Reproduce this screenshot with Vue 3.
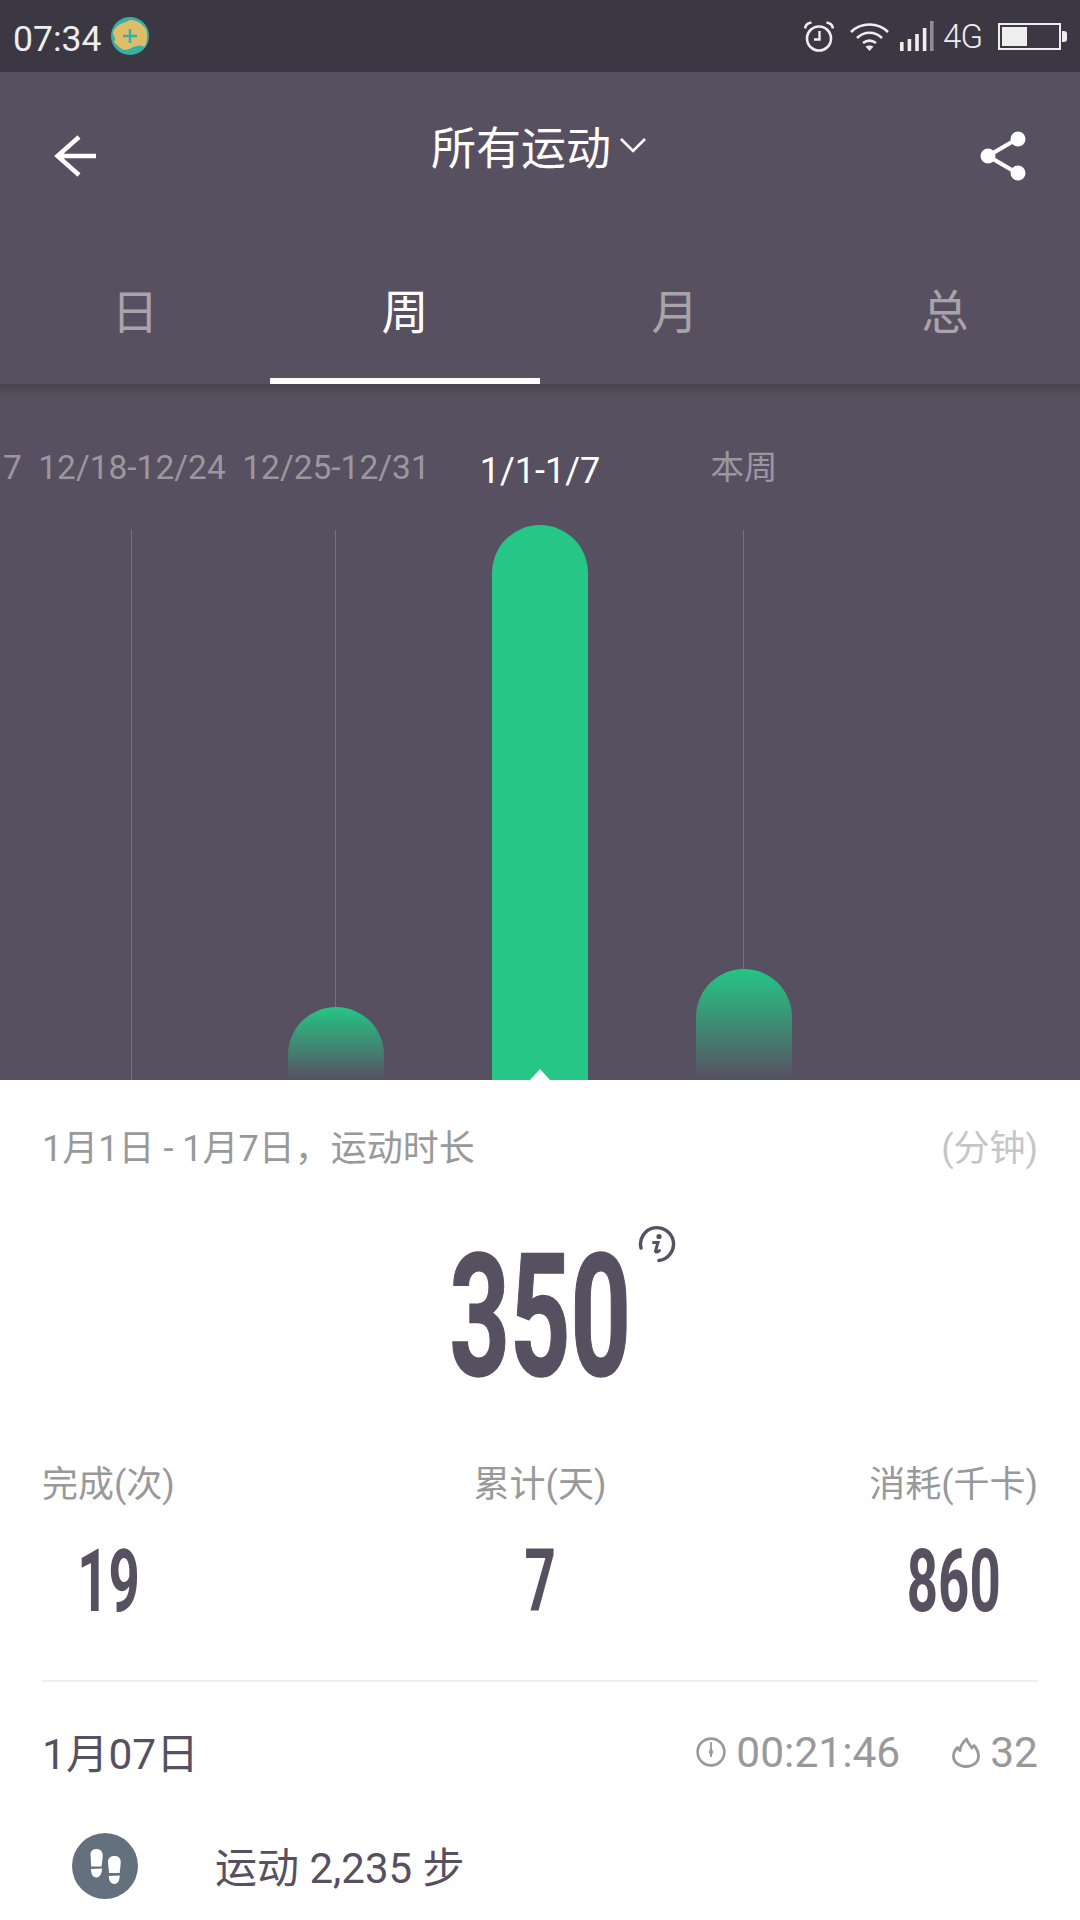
<template>
  <div class="page">
    <div class="status">
      <span class="time">07:34</span>
      <svg class="app-dot" width="38" height="38" viewBox="0 0 38 38">
        <circle cx="19" cy="19" r="19" fill="#37b0a4" />
        <path d="M2 15C6 6 14 6 19 3C27 3 32 8 35 12C37 20 36 27 33 30C27 26 22 31 15 33C10 33 6 28 3 25C6 22 2 19 2 15Z" fill="#dfbd68" />
        <path d="M19 12V26M12 19H26" stroke="#37b0a4" stroke-width="2.5" />
      </svg>
      <div class="status-right">
        <svg class="ic-alarm" width="30" height="31" viewBox="0 0 30 31" fill="none" stroke="#eee">
          <circle cx="15" cy="17.5" r="12" stroke-width="2.6" />
          <path d="M15.5 10V18.5H10" stroke-width="2.4" />
          <path d="M1 7.5C1.5 4 4 2 7.5 1.5M29 7.5C28.5 4 26 2 22.5 1.5" stroke-width="2.6" />
        </svg>
        <svg class="ic-wifi" width="39" height="30" viewBox="0 0 39 30" fill="none" stroke="#eee" stroke-width="2.6">
          <path d="M1 11C11 1 28 1 38 11" />
          <path d="M7 17C14 10 25 10 32 17" />
          <path d="M13 22C17 19 22 19 26 22" />
          <path d="M19.5 30L15.5 25.5C18 24 21 24 23.5 25.5Z" fill="#eee" stroke="none" />
        </svg>
        <svg class="ic-signal" width="34" height="30" viewBox="0 0 34 30">
          <rect x="0" y="21" width="3.6" height="9" fill="#eee" />
          <rect x="7.6" y="18" width="3.6" height="12" fill="#eee" />
          <rect x="15.2" y="13" width="3.6" height="17" fill="#eee" />
          <rect x="22.8" y="7" width="3.6" height="23" fill="#eee" />
          <rect x="30" y="0" width="3.6" height="30" fill="#8f8c93" />
        </svg>
        <span class="net">4G</span>
        <div class="battery"><div class="battery-fill"></div></div>
      </div>
    </div>

    <div class="top">
      <div class="nav">
        <svg width="44" height="44" viewBox="0 0 44 44" fill="none" stroke="#fff" stroke-width="4.4">
          <path d="M25 3L3.500 22L25 41M3.500 22H42" />
        </svg>
        <div class="nav-title">
          <span>所有运动</span>
          <svg width="28" height="17" viewBox="0 0 28 17" fill="none" stroke="#fff" stroke-width="2.6">
            <path d="M2 2L14 14L26 2" />
          </svg>
        </div>
        <svg width="46" height="50" viewBox="0 0 46 50" fill="#fff">
          <path d="M37 8L8 25L37 42" fill="none" stroke="#fff" stroke-width="4.2" />
          <circle cx="38" cy="8" r="7.5" />
          <circle cx="8" cy="25" r="7.5" />
          <circle cx="38" cy="42" r="7.5" />
        </svg>
      </div>
      <div class="tabs">
        <div v-for="t in tabs" :key="t" class="tab" :class="{ active: t === '周' }">{{ t }}</div>
      </div>
    </div>

    <div class="chart">
      <div v-for="(w, i) in weeks" :key="i" class="week" :class="{ current: w.active }">
        <div class="week-label">{{ w.label }}</div>
        <div class="track">
          <div v-if="w.line" class="line"></div>
          <div v-if="w.height" class="bar" :style="{ height: w.height + 'px' }"></div>
        </div>
      </div>
      <div class="pointer"></div>
    </div>

    <div class="panel">
      <div class="range">
        <span>1月1日 - 1月7日，运动时长</span>
        <span class="unit">(分钟)</span>
      </div>
      <div class="total">
        <span class="big">350</span>
        <svg class="info" width="38" height="38" viewBox="0 0 38 38" fill="none" stroke="#575060">
          <path d="M3 23A16.500 16.500 0 1 1 21 35.500" stroke-width="3.4" stroke-linecap="round" />
          <circle cx="21" cy="11.5" r="2.6" fill="#575060" stroke="none" />
          <path d="M15.500 17.500H20L17.500 26C17.500 27.500 19.500 27.500 21.500 25.500" stroke-width="3" stroke-linecap="round" />
        </svg>
      </div>
      <div class="stats">
        <div v-for="s in stats" :key="s.label" class="stat">
          <span class="stat-label">{{ s.label }}</span>
          <span class="stat-value">{{ s.value }}</span>
        </div>
      </div>
      <div class="day">
        <span class="day-date">1月07日</span>
        <div class="day-info">
          <svg width="30" height="30" viewBox="0 0 30 30" fill="none" stroke="#999">
            <circle cx="15" cy="15" r="13.4" stroke-width="2.6" />
            <path d="M15 5V20" stroke-width="1.8" />
            <path d="M15 10.500L17.400 15L15 19.500L12.600 15Z" fill="#999" stroke="none" />
          </svg>
          <span class="duration">00:21:46</span>
          <svg class="flame" width="28" height="31" viewBox="0 0 28 31" fill="none" stroke="#999" stroke-width="2.8" stroke-linejoin="round">
            <path d="M14.500 2C15.500 6 18.500 8 20 11L22 8.500C25 12 26.500 15.500 26.500 19C26.500 25.500 21 29.500 14 29.500C7 29.500 1.500 25.500 1.500 19C1.500 15 3.500 12.500 5.500 10.500C6 12 7 13 8 13.500C8.500 9 11 5 14.500 2Z" />
          </svg>
          <span class="kcal">32</span>
        </div>
      </div>
      <div class="steps">
        <div class="steps-icon">
          <svg width="31" height="35" viewBox="0 0 31 35" fill="#fff">
            <path d="M0.500 5.500C0.500 2 3 0 6.500 0C10 0 12.700 2.200 12.700 6C12.700 10 12 14 11.500 17.500L1.200 17.500C1.200 13.500 0.500 9.500 0.500 5.500Z" />
            <path d="M1 20L12 19.600C12 25 9.500 28.500 6.500 28.500C3 28.500 1 25 1 20Z" />
            <path d="M18 12.500C18 9 21 7 24.500 7C28 7 30.700 9 30.700 12.500C30.700 16.500 30 20.500 29.700 24H19C19 20 18 16.500 18 12.500Z" />
            <path d="M18.800 27L29.700 26.600C29.700 32 27.500 35 24.500 35C21 35 18.800 32 18.800 27Z" />
          </svg>
        </div>
        <span class="steps-text">运动 2,235 步</span>
      </div>
    </div>
  </div>
</template>

<script setup>
const tabs = ['日', '周', '月', '总']

const weeks = [
  { label: '12/11-12/17', line: false, height: 0 },
  { label: '12/18-12/24', line: true, height: 0 },
  { label: '12/25-12/31', line: true, height: 73 },
  { label: '1/1-1/7', line: false, height: 555, active: true },
  { label: '本周', line: true, height: 111 },
  { label: '', line: false, height: 0 },
  { label: '', line: false, height: 0 }
]

const stats = [
  { label: '完成(次)', value: '19' },
  { label: '累计(天)', value: '7' },
  { label: '消耗(千卡)', value: '860' }
]
</script>

<style>
html,
body {
  margin: 0;
  background: #fff;
}
</style>

<style scoped>
.page {
  width: 1080px;
  height: 1920px;
  overflow: hidden;
  background: #fff;
  font-family: Roboto, "Noto Sans CJK SC", sans-serif;
}

.status {
  height: 72px;
  box-sizing: border-box;
  padding: 0 13px;
  display: flex;
  align-items: center;
  background: #3c3843;
  color: #eee;
}

.time {
  font-size: 35.5px;
  line-height: 72px;
  padding-top: 6px;
}

.app-dot {
  margin-left: 10px;
}

.status-right {
  margin-left: auto;
  display: flex;
  align-items: center;
}

.ic-wifi {
  margin-left: 16px;
}

.ic-signal {
  margin-left: 11px;
}

.net {
  margin-left: 9px;
  font-size: 33px;
  font-weight: 300;
  letter-spacing: -1px;
}

.battery {
  position: relative;
  margin-left: 16px;
  margin-right: 6px;
  width: 63px;
  height: 27px;
  box-sizing: border-box;
  border: 2px solid #eee;
  padding: 2px;
}

.battery::after {
  content: "";
  position: absolute;
  right: -8px;
  top: 6px;
  width: 5px;
  height: 11px;
  background: #eee;
  border-radius: 0 3px 3px 0;
}

.battery-fill {
  width: 25px;
  height: 100%;
  background: #eee;
}

.top {
  height: 312px;
  background: #575060;
}

.nav {
  height: 166px;
  box-sizing: border-box;
  padding: 0 54px;
  display: flex;
  align-items: center;
  justify-content: space-between;
}

.nav > svg {
  margin-top: 2px;
}

.nav-title {
  margin-top: -19px;
  display: flex;
  align-items: center;
  gap: 8px;
  color: #fff;
  font-size: 45px;
}

.tabs {
  height: 146px;
  display: flex;
}

.tab {
  flex: 1;
  box-sizing: border-box;
  padding-top: 21px;
  height: 146px;
  line-height: 108px;
  text-align: center;
  color: #a8a4ab;
  font-size: 47px;
}

.tab.active {
  color: #fff;
  border-bottom: 6px solid #fff;
}

.chart {
  position: relative;
  height: 696px;
  background: #575060;
  overflow: hidden;
  display: flex;
  justify-content: center;
}

.chart::before {
  content: "";
  position: absolute;
  left: 0;
  right: 0;
  top: 0;
  height: 14px;
  background: linear-gradient(rgba(0, 0, 0, 0.15), rgba(0, 0, 0, 0));
}

.week {
  flex: 0 0 204px;
  display: flex;
  flex-direction: column;
  align-items: center;
}

.week-label {
  height: 146px;
  padding-top: 65px;
  box-sizing: border-box;
  white-space: nowrap;
  color: #9b97a0;
  font-size: 33.5px;
  line-height: 38px;
}

.current .week-label {
  padding-top: 68px;
  color: #fff;
  font-size: 36px;
}

.track {
  flex: 1;
  display: flex;
  flex-direction: column;
  align-items: center;
  justify-content: flex-end;
}

.line {
  flex: 1;
  width: 1px;
  background: #767180;
  margin-left: -1px;
}

.bar {
  width: 96px;
  border-radius: 48px 48px 0 0;
  background: linear-gradient(#25c686, #575060);
}

.current .bar {
  background: #25c686;
}

.pointer {
  position: absolute;
  left: 530px;
  bottom: 0;
  width: 0;
  height: 0;
  border-left: 10px solid transparent;
  border-right: 10px solid transparent;
  border-bottom: 11px solid #fff;
}

.panel {
  padding: 0 42px;
}

.range {
  display: flex;
  justify-content: space-between;
  padding-top: 45px;
  font-size: 36px;
  line-height: 48px;
  color: #999;
}

.unit {
  color: #c6c6c6;
}

.total {
  position: relative;
  height: 288px;
  display: flex;
  justify-content: center;
  align-items: center;
}

.big {
  display: inline-block;
  font-weight: 700;
  font-size: 170px;
  line-height: 170px;
  color: #575060;
  -webkit-text-stroke: 1.5px #575060;
  transform: scaleX(0.62);
}

.info {
  position: absolute;
  left: 596px;
  top: 52px;
}

.stats {
  display: grid;
  grid-template-columns: 1fr auto 1fr;
}

.stat {
  display: flex;
  flex-direction: column;
  align-items: center;
  justify-self: center;
}

.stat:first-child {
  justify-self: start;
}

.stat:last-child {
  justify-self: end;
}

.stat-label {
  font-size: 36px;
  line-height: 48px;
  color: #999;
}

.stat-value {
  margin-top: 28px;
  display: inline-block;
  font-weight: 700;
  font-size: 88px;
  line-height: 88px;
  color: #575060;
  transform: scaleX(0.62);
}

.day {
  margin-top: 55px;
  height: 141px;
  box-sizing: border-box;
  padding-top: 1px;
  border-top: 2px solid #eeeeee;
  display: flex;
  justify-content: space-between;
  align-items: center;
}

.day-date {
  margin-top: -3px;
  font-size: 42.5px;
  color: #575060;
}

.day-info {
  display: flex;
  align-items: center;
  font-size: 42.5px;
  color: #999;
}

.duration {
  margin-left: 10px;
}

.flame {
  margin-left: 52px;
}

.kcal {
  margin-left: 10px;
}

.steps {
  display: flex;
  align-items: center;
  padding-top: 12px;
  padding-left: 30px;
}

.steps-icon {
  width: 66px;
  height: 66px;
  border-radius: 50%;
  background: #64707e;
  display: flex;
  align-items: center;
  justify-content: center;
}

.steps-text {
  margin-top: -4px;
  margin-left: 77px;
  font-size: 42px;
  color: #575060;
}
</style>
